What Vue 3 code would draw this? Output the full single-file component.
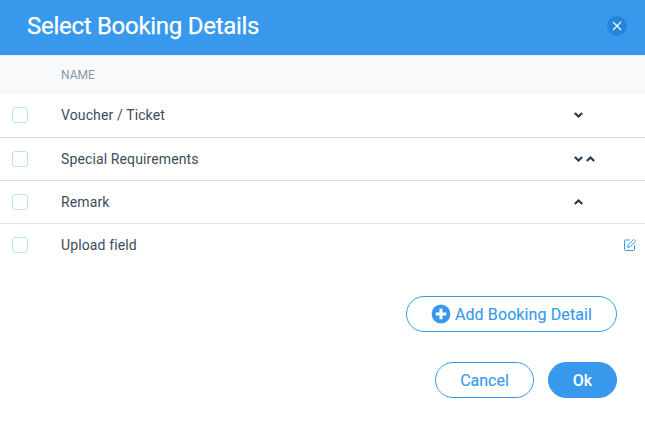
<script setup>
const rows = [
  { name: 'Voucher / Ticket', down: true },
  { name: 'Special Requirements', down: true, up: true },
  { name: 'Remark', up: true },
  { name: 'Upload field', edit: true },
]
</script>

<template>
  <main class="dialog">
    <header class="header">
      <h1>Select Booking Details</h1>
      <button class="close" aria-label="Close">
        <svg width="20" height="20" viewBox="0 0 20 20"><path d="M6 6l8 8M14 6l-8 8" stroke="#fff" stroke-width="1.1" /></svg>
      </button>
    </header>
    <div class="table-head">NAME</div>
    <div v-for="row in rows" :key="row.name" class="row">
      <span class="checkbox" role="checkbox" aria-checked="false"></span>
      <span class="name">{{ row.name }}</span>
      <span class="arrows">
        <svg v-if="row.down" width="9" height="6" viewBox="0 0 9 6"><path d="M.8 1l3.700 3.500L8.200 1" /></svg>
        <svg v-if="row.up" width="9" height="6" viewBox="0 0 9 6"><path d="M.8 5l3.700-3.500L8.200 5" /></svg>
      </span>
      <svg v-if="row.edit" class="edit" width="12" height="12" viewBox="0 0 12 12">
        <path d="M5.8 1H1.5Q.5 1 .5 2v8.500q0 1 1 1H9.500q1 0 1-1V6.300" />
        <path d="M3.600 8.400l.5-2.400L9.300.8q.5-.5 1 0l.9.9q.5.500 0 1L6 7.900z" />
      </svg>
    </div>
    <div class="add-line">
      <button class="btn add">
        <svg width="20" height="20" viewBox="0 0 20 20"><circle cx="10" cy="10" r="9.400" fill="#3899ec" /><path d="M10 4.800v10.400M4.800 10h10.400" stroke="#fff" stroke-width="3" /></svg>
        <span>Add Booking Detail</span>
      </button>
    </div>
    <footer class="footer">
      <button class="btn cancel">Cancel</button>
      <button class="btn ok">Ok</button>
    </footer>
  </main>
</template>

<style>
body { margin: 0; background: #fff; }
</style>

<style scoped>
.dialog { height: 422px; overflow: hidden; font-family: Roboto, sans-serif; color: #32536a; background: #fff; }
.dialog * { box-sizing: border-box; }
svg { display: block; flex: none; fill: none; }
button { font-family: inherit; margin: 0; padding: 0; }
.header { height: 55px; display: flex; align-items: center; justify-content: space-between; padding: 0 18px 4px 27px; background: #3899ec; color: #fff; }
h1 { margin: 0; font-size: 24px; line-height: 32px; font-weight: 400; letter-spacing: -0.28px; -webkit-text-stroke: 0.25px #fff; }
.close { width: 20px; height: 20px; border: 0; border-radius: 50%; background: #2684da; }
.table-head { height: 39px; border-top: 1px solid #e8eef3; padding-left: 61px; background: #f7f9fb; color: #8498aa; font-size: 12px; line-height: 38px; }
.row { height: 43px; display: flex; align-items: center; padding: 0 9px 0 12px; border-bottom: 1px solid #dfe1c9; font-size: 14px; }
.table-head + .row { height: 44px; padding-bottom: 1px; }
.row:nth-child(5) { border-bottom-color: #dfe5eb; }
.row:nth-child(6) { border-bottom: 0; padding-bottom: 1px; }
.checkbox { width: 16px; height: 16px; border: 1px solid #bfe2fb; border-radius: 3px; margin-right: 33px; }
.name { width: 513px; color: #3b4d5c; letter-spacing: 0.12px; }
.arrows { display: flex; gap: 3px; flex: 1; }
.arrows path { stroke: #263b4b; stroke-width: 2.2; }
.edit path { stroke: #3899ec; stroke-width: 1; }
.add-line { display: flex; justify-content: flex-end; padding: 29px 28px 0; }
.btn { height: 36px; border: 1px solid #3899ec; border-radius: 18px; background: #fff; color: #3899ec; font-size: 16px; -webkit-text-stroke: 0.15px #3899ec; }
.add { width: 211px; display: flex; align-items: center; justify-content: center; gap: 4px; letter-spacing: 0.11px; }
.footer { display: flex; justify-content: flex-end; gap: 14px; padding: 30px 28px 0; }
.cancel { width: 99px; }
.ok { width: 69px; background: #3899ec; color: #fff; font-weight: 500; -webkit-text-stroke: 0; }
</style>
